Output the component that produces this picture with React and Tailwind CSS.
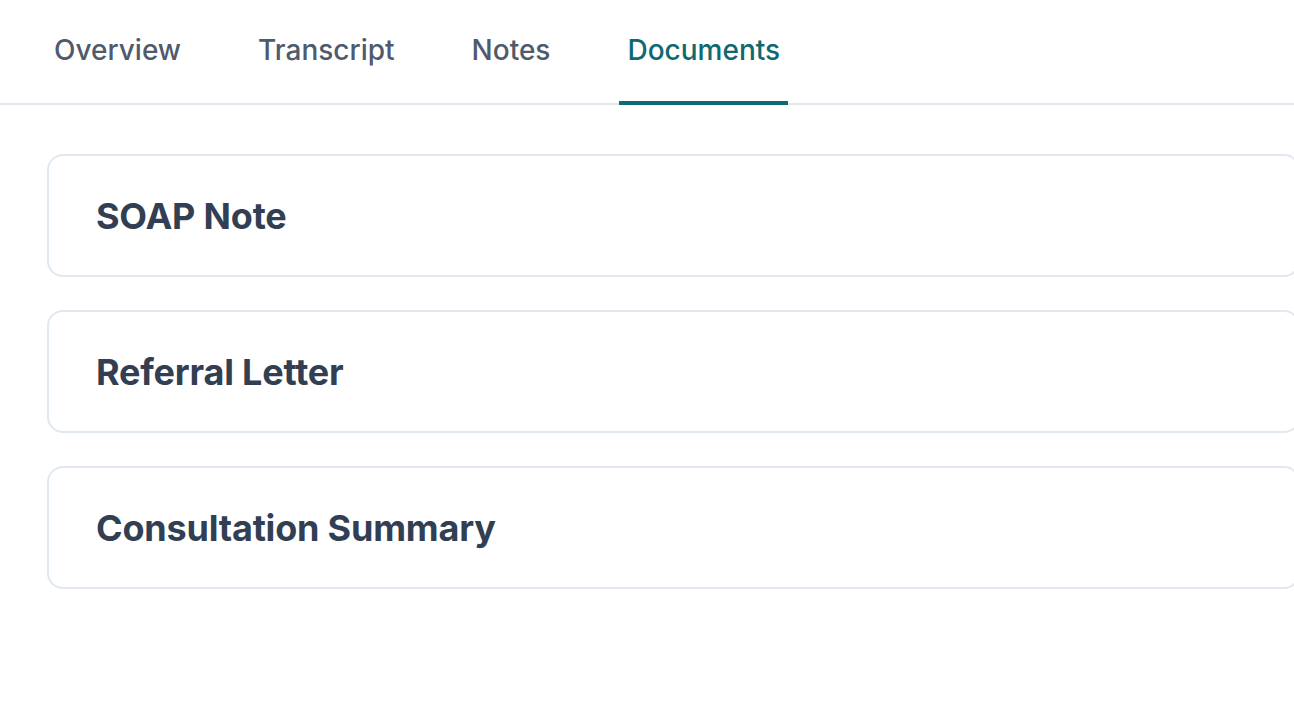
const tabs = ['Overview', 'Transcript', 'Notes', 'Documents'];
const docs = ['SOAP Note', 'Referral Letter', 'Consultation Summary'];

export default function App() {
  const active = 'Documents';
  return (
    <div className="h-[714px] w-[1294px] overflow-hidden bg-white" style={{ fontFamily: 'Inter, "Liberation Sans", sans-serif' }}>
      <nav className="flex gap-[61px] border-b-2 border-[#e2e8f0] pl-[46px]">
        {tabs.map((t) => (
          <button
            key={t}
            type="button"
            className={
              t === active
                ? '-mb-[2px] border-b-4 border-[#0e6970] px-2 pt-[32px] pb-[33px] text-[28px] leading-[36px] font-medium text-[#0e6970]'
                : '-mb-[2px] border-b-4 border-transparent px-2 pt-[32px] pb-[33px] text-[28px] leading-[36px] font-medium text-[#4f5a6c]'
            }
          >
            {t}
          </button>
        ))}
      </nav>
      <div className="flex w-[1300px] flex-col gap-[33px] pt-[49px] pl-[47px]">
        {docs.map((d) => (
          <div key={d} className="flex h-[123px] items-center rounded-2xl border-2 border-[#e2e8f0] pl-[47px]">
            <h3 className="text-[36px] font-bold tracking-[-0.2px] text-[#323f53]">{d}</h3>
          </div>
        ))}
      </div>
    </div>
  );
}
